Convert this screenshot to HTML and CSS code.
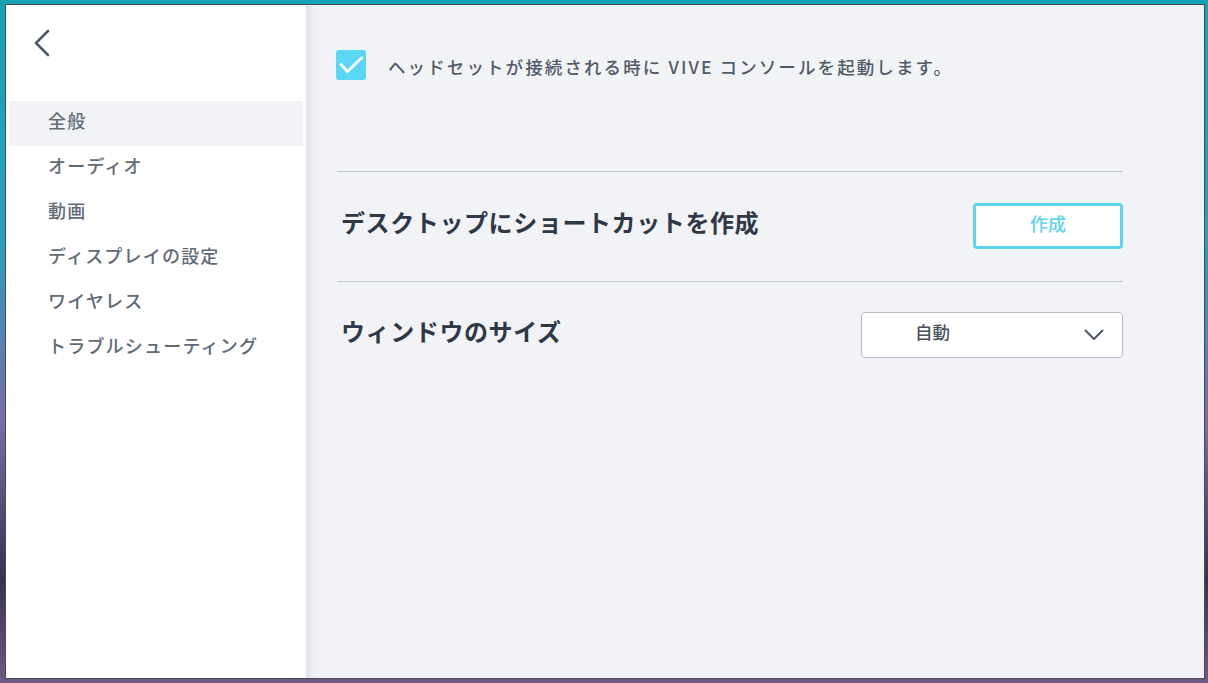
FILE: index.html
```html
<!DOCTYPE html>
<html lang="ja">
<head>
  <meta charset="UTF-8" />
  <meta name="viewport" content="width=device-width, initial-scale=1.0"/>
  <title>VIVE コンソール 設定</title>
  <link rel="stylesheet" href="styles.css">
</head>
<body>

  <div class="window">

    <!-- Sidebar -->
    <div class="sidebar">
      <button class="back-btn" aria-label="戻る">
        <svg width="16" height="28" viewBox="0 0 16 28">
          <path d="M14 2 L2 14 L14 26" fill="none" stroke="#4f5a69" stroke-width="2.6" stroke-linecap="round" stroke-linejoin="round"/>
        </svg>
      </button>

      <ul class="nav">
        <li class="nav-item active">全般</li>
        <li class="nav-item">オーディオ</li>
        <li class="nav-item">動画</li>
        <li class="nav-item">ディスプレイの設定</li>
        <li class="nav-item">ワイヤレス</li>
        <li class="nav-item">トラブルシューティング</li>
      </ul>
    </div>

    <!-- Main settings -->
    <div class="main">
      <label class="check-row">
        <span class="checkbox">
          <svg width="30" height="30" viewBox="0 0 30 30">
            <path d="M5 14.5 L11.5 21.5 L25.5 8" fill="none" stroke="#fff" stroke-width="3" stroke-linecap="round" stroke-linejoin="round"/>
          </svg>
        </span>
        <span class="check-label">ヘッドセットが接続される時に VIVE コンソールを起動します。</span>
      </label>

      <div class="settings">
        <div class="row">
          <div class="row-title">デスクトップにショートカットを作成</div>
          <button class="create-btn">作成</button>
        </div>
        <div class="row">
          <div class="row-title">ウィンドウのサイズ</div>
          <div class="select">
            <span class="select-value">自動</span>
            <svg width="20" height="12" viewBox="0 0 20 12">
              <path d="M1.5 1.5 L10 10 L18.5 1.5" fill="none" stroke="#4d5666" stroke-width="2" stroke-linecap="round" stroke-linejoin="round"/>
            </svg>
          </div>
        </div>
      </div>
    </div>

  </div>

</body>
</html>
```

FILE: styles.css
```css
html, body {
  margin: 0;
  height: 100%;
}

body {
  font-family: "Noto Sans CJK JP", "Noto Sans", sans-serif;
  background: linear-gradient(180deg, #15a4b7 0%, #2a9fbd 35%, #7b6ba6 62%, #3a2f52 85%, #6f5b86 100%);
  overflow: hidden;
}

.window {
  box-sizing: border-box;
  width: 1200px;
  height: 675px;
  margin: 4px 0 0 5px;
  border: 1px solid #4b4b4e;
  display: flex;
  background-color: #f2f3f7;
}

/* Sidebar */
.sidebar {
  width: 300px;
  flex-shrink: 0;
  background-color: #fff;
  padding-top: 24px;
}

.back-btn {
  display: block;
  margin-left: 28px;
  padding: 0;
  border: none;
  background: none;
  cursor: pointer;
  height: 28px;
}

.nav {
  list-style: none;
  margin: 44px 0 0;
  padding: 0;
}

.nav-item {
  box-sizing: border-box;
  height: 45px;
  margin: 0 3px;
  padding: 0 0 7px 39px;
  display: flex;
  align-items: center;
  font-size: 18px;
  font-weight: 500;
  letter-spacing: 1.2px;
  color: #616b75;
}

.nav-item.active {
  background-color: #f2f3f7;
}

/* Main */
.main {
  flex: 1;
  padding: 45px 81px 0 30px;
  background: linear-gradient(90deg, #dfe1e6 0px, #eceef2 6px, #f2f3f7 14px);
}

.check-row {
  display: flex;
  align-items: center;
  gap: 22px;
  height: 30px;
  margin-bottom: 91px;
  cursor: pointer;
}

.checkbox {
  width: 30px;
  height: 30px;
  border-radius: 3px;
  background-color: #5ad7f5;
  display: flex;
}

.check-label {
  font-size: 17.5px;
  font-weight: 500;
  letter-spacing: 2.1px;
  color: #505b69;
  padding-top: 2px;
}

.settings {
  margin-left: 1px;
}

.row {
  border-top: 1px solid #c2c8cf;
  padding: 31px 0 32px;
  display: flex;
  align-items: center;
  justify-content: space-between;
}

.row + .row {
  padding-top: 30px;
}

.row-title {
  font-size: 24px;
  font-weight: 700;
  letter-spacing: 0.6px;
  color: #2e3847;
  padding: 0 0 9px 4px;
}

.create-btn {
  box-sizing: border-box;
  width: 150px;
  height: 46px;
  padding: 0 0 6px;
  border: 3px solid #5dd6ec;
  border-radius: 4px;
  background-color: #fff;
  color: #5ed4ee;
  font-family: inherit;
  font-size: 18px;
  font-weight: 500;
  cursor: pointer;
}

.select {
  box-sizing: border-box;
  width: 262px;
  height: 46px;
  border: 1px solid #b5bdc8;
  border-radius: 4px;
  background-color: #fff;
  display: flex;
  align-items: center;
  justify-content: space-between;
  padding: 0 18px 0 53px;
  font-size: 17.5px;
  font-weight: 500;
  color: #4a5260;
}

.select-value {
  padding-bottom: 7px;
}
```
